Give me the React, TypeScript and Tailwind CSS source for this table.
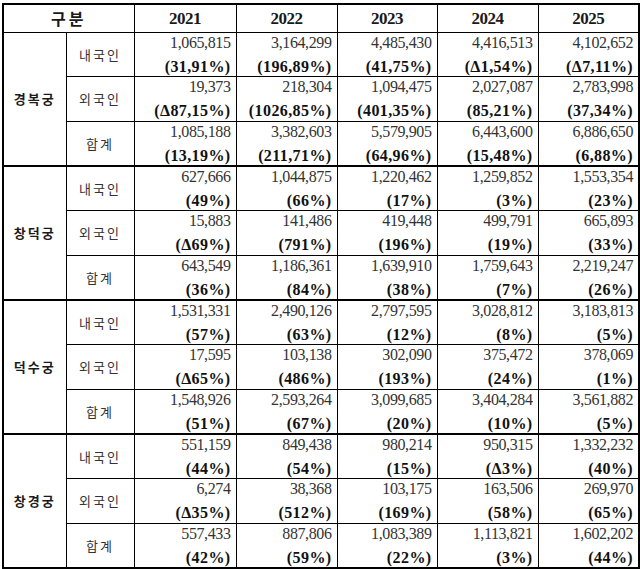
import React from "react";

type Cell = [string, string];
type Row = { label: string; cells: Cell[] };
type Group = { name: string; rows: Row[] };

const years = ["2021", "2022", "2023", "2024", "2025"];

const groups: Group[] = [
  {
    name: "경복궁",
    rows: [
      {
        label: "내국인",
        cells: [
          ["1,065,815", "(31,91%)"],
          ["3,164,299", "(196,89%)"],
          ["4,485,430", "(41,75%)"],
          ["4,416,513", "(Δ1,54%)"],
          ["4,102,652", "(Δ7,11%)"],
        ],
      },
      {
        label: "외국인",
        cells: [
          ["19,373", "(Δ87,15%)"],
          ["218,304", "(1026,85%)"],
          ["1,094,475", "(401,35%)"],
          ["2,027,087", "(85,21%)"],
          ["2,783,998", "(37,34%)"],
        ],
      },
      {
        label: "합계",
        cells: [
          ["1,085,188", "(13,19%)"],
          ["3,382,603", "(211,71%)"],
          ["5,579,905", "(64,96%)"],
          ["6,443,600", "(15,48%)"],
          ["6,886,650", "(6,88%)"],
        ],
      },
    ],
  },
  {
    name: "창덕궁",
    rows: [
      {
        label: "내국인",
        cells: [
          ["627,666", "(49%)"],
          ["1,044,875", "(66%)"],
          ["1,220,462", "(17%)"],
          ["1,259,852", "(3%)"],
          ["1,553,354", "(23%)"],
        ],
      },
      {
        label: "외국인",
        cells: [
          ["15,883", "(Δ69%)"],
          ["141,486", "(791%)"],
          ["419,448", "(196%)"],
          ["499,791", "(19%)"],
          ["665,893", "(33%)"],
        ],
      },
      {
        label: "합계",
        cells: [
          ["643,549", "(36%)"],
          ["1,186,361", "(84%)"],
          ["1,639,910", "(38%)"],
          ["1,759,643", "(7%)"],
          ["2,219,247", "(26%)"],
        ],
      },
    ],
  },
  {
    name: "덕수궁",
    rows: [
      {
        label: "내국인",
        cells: [
          ["1,531,331", "(57%)"],
          ["2,490,126", "(63%)"],
          ["2,797,595", "(12%)"],
          ["3,028,812", "(8%)"],
          ["3,183,813", "(5%)"],
        ],
      },
      {
        label: "외국인",
        cells: [
          ["17,595", "(Δ65%)"],
          ["103,138", "(486%)"],
          ["302,090", "(193%)"],
          ["375,472", "(24%)"],
          ["378,069", "(1%)"],
        ],
      },
      {
        label: "합계",
        cells: [
          ["1,548,926", "(51%)"],
          ["2,593,264", "(67%)"],
          ["3,099,685", "(20%)"],
          ["3,404,284", "(10%)"],
          ["3,561,882", "(5%)"],
        ],
      },
    ],
  },
  {
    name: "창경궁",
    rows: [
      {
        label: "내국인",
        cells: [
          ["551,159", "(44%)"],
          ["849,438", "(54%)"],
          ["980,214", "(15%)"],
          ["950,315", "(Δ3%)"],
          ["1,332,232", "(40%)"],
        ],
      },
      {
        label: "외국인",
        cells: [
          ["6,274", "(Δ35%)"],
          ["38,368", "(512%)"],
          ["103,175", "(169%)"],
          ["163,506", "(58%)"],
          ["269,970", "(65%)"],
        ],
      },
      {
        label: "합계",
        cells: [
          ["557,433", "(42%)"],
          ["887,806", "(59%)"],
          ["1,083,389", "(22%)"],
          ["1,113,821", "(3%)"],
          ["1,602,202", "(44%)"],
        ],
      },
    ],
  },
];

const serif = "font-['Liberation_Serif','Noto_Sans_CJK_KR',serif]";
const korean = "font-['Noto_Sans_CJK_KR',sans-serif]";

function App() {
  return (
    <div className="w-[640px] h-[569px] bg-white pt-[3px] pl-[2px]">
      <table className="table-fixed border-collapse w-[636px] border-2 border-black text-[#1a1a1a]">
        <colgroup>
          <col className="w-[63px]" />
          <col className="w-[68px]" />
          {years.map((y) => (
            <col key={y} className={y === "2023" ? "w-[100px]" : y === "2021" ? "w-[102px]" : "w-[101px]"} />
          ))}
        </colgroup>
        <thead>
          {/* Header */}
          <tr className="h-[28px]">
            <th colSpan={2} className={`${korean} border border-black text-[16px] font-bold tracking-[3px] p-0`}>
              구분
            </th>
            {years.map((y) => (
              <th key={y} className={`${serif} border border-black text-[17px] font-bold p-0 tracking-[-0.5px]`}>
                {y}
              </th>
            ))}
          </tr>
        </thead>
        <tbody>
          {groups.map((g) =>
            g.rows.map((r, i) => (
              <tr
                key={g.name + r.label}
                className={`h-[44.67px] ${i === 2 ? "border-b-2 border-black" : ""}`}
              >
                {i === 0 && (
                  <td
                    rowSpan={3}
                    className={`${korean} border border-black border-b-2 text-center text-[13px] font-bold tracking-[2px] p-0`}
                  >
                    {g.name}
                  </td>
                )}
                <td className={`${korean} border border-black text-center text-[13px] tracking-[2px] text-[#333] p-0`}>
                  {r.label}
                </td>
                {r.cells.map(([num, pct], j) => (
                  <td key={j} className="border border-black p-0 align-top">
                    <div className={`${serif} h-[43px] flex flex-col justify-between items-end pr-[5px] pt-[1px]`}>
                      <span className="text-[16px] leading-[18px] tracking-[-0.4px] text-[#333]">{num}</span>
                      <span className="text-[16px] leading-[18px] font-bold tracking-[0.4px] text-[#111]">{pct}</span>
                    </div>
                  </td>
                ))}
              </tr>
            ))
          )}
        </tbody>
      </table>
    </div>
  );
}

export default App;
